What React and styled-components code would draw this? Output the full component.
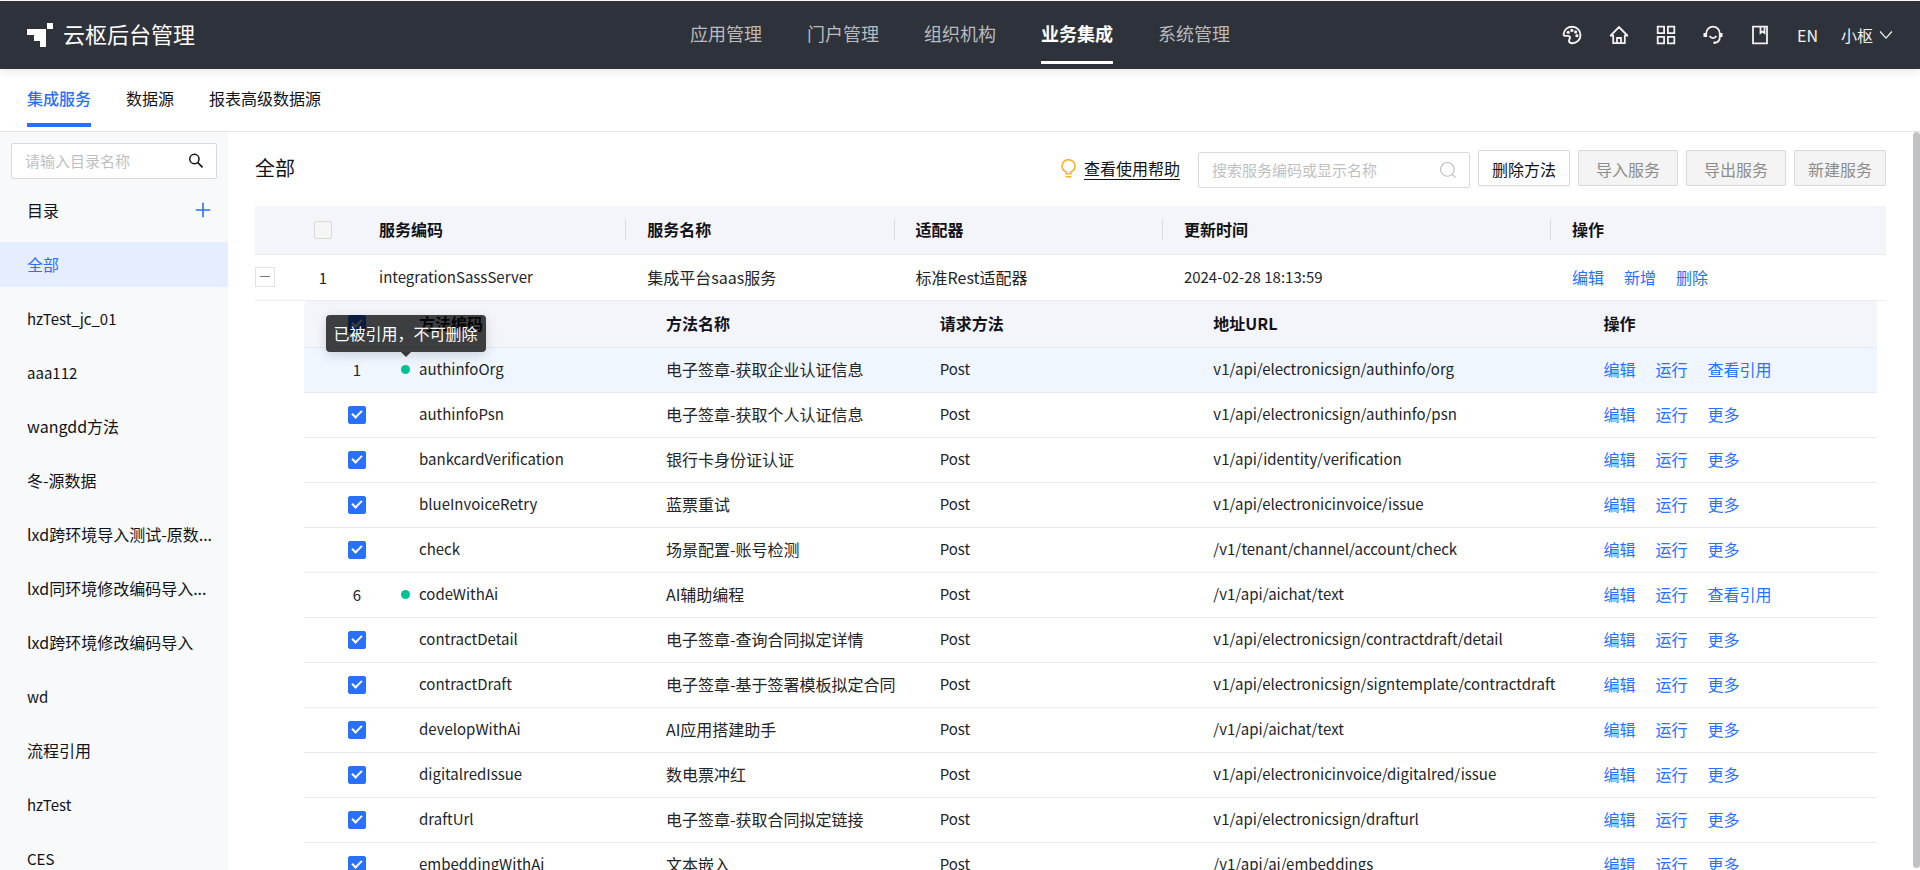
import React, { useState } from 'react';
import styled, { createGlobalStyle, css } from 'styled-components';

const GlobalStyle = createGlobalStyle`
  *, *::before, *::after { box-sizing: border-box; }
  html, body, #root { height: 100%; }
  body {
    margin: 0;
    overflow: hidden;
    background: #fff;
    color: #111218;
    font-family: "Noto Sans CJK SC", "Noto Sans", sans-serif;
    font-size: 16px;
    line-height: 24px;
  }
  a { color: inherit; text-decoration: none; }
  button, input { font: inherit; color: inherit; }
  button { cursor: pointer; }
  button:disabled { cursor: not-allowed; }
`;

const Page = styled.div`
  display: flex;
  flex-direction: column;
  height: 100vh;
  padding-top: 1px;
`;

const Header = styled.header`
  display: grid;
  grid-template-columns: 1fr auto 1fr;
  align-items: center;
  flex: none;
  height: 68px;
  padding: 0 27px;
  background: #2e323a;
  color: #fff;
  box-shadow: 0 2px 9px rgba(0, 0, 0, 0.1);
  z-index: 2;
`;

const Brand = styled.a`
  display: flex;
  align-items: center;
  gap: 10px;
  font-size: 22px;
  span { padding-bottom: 4px; }
`;

const MainNav = styled.nav`
  display: flex;
  gap: 45px;
  height: 100%;
`;

const NavLink = styled.a`
  display: flex;
  align-items: center;
  height: 63px;
  padding-top: 4px;
  border-bottom: 3px solid transparent;
  font-size: 18px;
  color: #b9bbbe;
  ${p => p.$active && css`
    border-color: #fff;
    color: #fff;
    font-weight: 700;
  `}
`;

const HeaderTools = styled.div`
  display: flex;
  align-items: center;
  justify-content: flex-end;
  gap: 27px;
`;

const ToolButton = styled.button`
  display: flex;
  align-items: center;
  gap: 6px;
  padding: 0;
  border: 0;
  background: none;
  color: #f2f2f2;
  svg { display: block; }
`;

const UserTools = styled.div`
  display: flex;
  gap: 23px;
`;

const SubNav = styled.nav`
  display: flex;
  gap: 35px;
  flex: none;
  height: 63px;
  padding: 0 27px;
  border-bottom: 1px solid #e3e4e6;
`;

const SubLink = styled.a`
  display: flex;
  align-items: center;
  height: 58px;
  padding-top: 4px;
  border-bottom: 4px solid transparent;
  ${p => p.$active && css`
    border-color: #2970ff;
    color: #2970ff;
    font-weight: 500;
  `}
`;

const Body = styled.div`
  display: flex;
  flex: 1;
  min-height: 0;
`;

const Sidebar = styled.aside`
  flex: none;
  width: 228px;
  overflow: hidden;
  background: #f7f9fb;
`;

const SearchBox = styled.label`
  display: flex;
  align-items: center;
  align-self: flex-end;
  width: ${p => p.$width};
  height: 36px;
  margin: ${p => p.$margin || 0};
  padding: 0 12px 0 13px;
  border: 1px solid #d9d9d9;
  border-radius: 2px;
  background: #fff;
  svg { flex: none; color: ${p => p.$muted ? '#bfbfbf' : '#111218'}; }
`;

const SearchInput = styled.input`
  flex: 1;
  min-width: 0;
  padding: 0;
  border: 0;
  outline: 0;
  background: none;
  font-size: 15px;
  &::placeholder { color: #bfbfbf; opacity: 1; }
`;

const CatalogHead = styled.div`
  display: flex;
  align-items: center;
  justify-content: space-between;
  height: 63px;
  padding: 0 17px 2px 27px;
`;

const PlusButton = styled(ToolButton)`
  color: #2970ff;
`;

const CatalogList = styled.ul`
  display: flex;
  flex-direction: column;
  gap: 9px;
  margin: 0;
  padding: 0;
  list-style: none;
`;

const CatalogLink = styled.a`
  display: block;
  padding: 0 9px 0 27px;
  font-size: ${p => p.$latin ? '15px' : '16px'};
  line-height: 45px;
  white-space: nowrap;
  ${p => p.$active && css`
    background: #e5eeff;
    color: #2970ff;
  `}
`;

const Content = styled.main`
  flex: 1;
  min-width: 0;
  padding: 18px 27px 0;
  overflow: hidden;
`;

const Scrollbar = styled.div`
  flex: none;
  width: 7px;
  margin-bottom: 2px;
  border-radius: 4px;
  background: #c1c2c4;
`;

const Toolbar = styled.div`
  display: flex;
  align-items: flex-start;
  gap: 8px;
  height: 38px;
  margin-bottom: 18px;
  line-height: 36px;
`;

const PageTitle = styled.h1`
  flex: 1;
  margin: 0;
  font-size: 20px;
  font-weight: 400;
`;

const HelpLink = styled.a`
  display: flex;
  align-items: center;
  gap: 8px;
  height: 36px;
  margin-right: 10px;
  span {
    border-bottom: 1px solid #111218;
    line-height: 22px;
  }
`;

const ActionButton = styled.button`
  height: 36px;
  padding: 0 ${p => p.$wide ? '17px' : '13px'} 2px;
  border: 1px solid #d9d9d9;
  border-radius: 2px;
  background: #fff;
  box-shadow: 0 2px 0 rgba(0, 0, 0, 0.02);
  &:disabled {
    background: #f4f4f4;
    color: #8c8c8c;
    box-shadow: none;
  }
`;

const Table = styled.table`
  width: 100%;
  table-layout: fixed;
  border-collapse: separate;
  border-spacing: 0;
  text-align: left;
`;

const HeadCell = styled.th`
  height: ${p => p.$nested ? '47px' : '49px'};
  padding: 0 0 2px;
  border-bottom: 1px solid #e8eaec;
  background: #f4f5fa;
  font-weight: 700;
  &:first-child { border-top-left-radius: ${p => p.$nested ? '5px' : '0'}; }
`;

const CheckHeadCell = styled(HeadCell)`
  padding: 0 0 0 ${p => p.$nested ? '12px' : '0'};
`;

const HeadLabel = styled.div`
  padding-left: 21px;
  line-height: 21px;
  border-right: 1px solid ${p => p.$divider ? '#dcdde0' : 'transparent'};
`;

const Cell = styled.td`
  height: ${p => p.$nested ? '45px' : '46px'};
  padding: 0 0 2px ${p => p.$flush ? '0' : '21px'};
  border-bottom: 1px solid #ebecee;
  background: ${p => p.$hover ? '#eff6ff' : 'transparent'};
  color: #22242a;
  font-size: ${p => p.$latin ? '15px' : '16px'};
  white-space: nowrap;
`;

const IndexCell = styled(Cell)`
  padding: 0 0 0 ${p => p.$nested ? '12px' : '0'};
  text-align: center;
`;

const NestedCell = styled.td`
  padding: 0 9px 0 49px;
`;

const ExpandButton = styled.button`
  display: grid;
  place-items: center;
  width: 20px;
  height: 20px;
  padding: 0;
  border: 1px solid #e3e3e3;
  background: #fff;
  &::before {
    content: "";
    width: 10px;
    height: 1px;
    background: #777;
  }
`;

const CheckBox = styled.input`
  display: block;
  appearance: none;
  width: 18px;
  height: 18px;
  margin: 0 auto;
  border: 1px solid #d9d9d9;
  border-radius: 2px;
  background: #f5f5f5;
  &:checked {
    border-color: #2970ff;
    background: #2970ff;
  }
  &:checked::after {
    content: "";
    display: block;
    width: 6px;
    height: 10px;
    margin: 1px 0 0 5px;
    border: solid #fff;
    border-width: 0 2px 2px 0;
    transform: rotate(45deg);
  }
`;

const CodeLabel = styled.div`
  display: flex;
  align-items: center;
  gap: 9px;
  padding-left: ${p => p.$marked ? '3px' : '21px'};
`;

const Marker = styled.span`
  position: relative;
  width: 9px;
  height: 9px;
  border-radius: 50%;
  background: #00c293;
`;

const Tooltip = styled.span`
  position: absolute;
  left: 50%;
  bottom: 22px;
  margin-left: -80px;
  width: 160px;
  border-radius: 4px;
  background: rgba(0, 0, 0, 0.75);
  color: #fff;
  font-size: 16px;
  line-height: 37px;
  text-align: center;
  box-shadow: 0 3px 12px rgba(0, 0, 0, 0.15);
  z-index: 1;
  &::after {
    content: "";
    position: absolute;
    left: 50%;
    top: 100%;
    margin-left: -5px;
    border: 5px solid transparent;
    border-top-color: rgba(0, 0, 0, 0.75);
  }
`;

const Links = styled.div`
  display: flex;
  gap: 20px;
  color: #2970ff;
`;

const Icon = ({ size = 20, width = 1.5, children }) => (
  <svg width={size} height={size} viewBox="0 0 20 20" fill="none" stroke="currentColor" strokeWidth={width} aria-hidden="true">
    {children}
  </svg>
);

const Logo = () => (
  <svg width="26" height="24" viewBox="0 0 26 24" fill="#fff" aria-hidden="true">
    <path d="M20 0h6v6h-6zM0 6h19v18h-6v-6H7v-6H0z" />
  </svg>
);

const PaletteIcon = () => (
  <Icon width={1.9}>
    <path d="M1.600 9.800C1.900 5 5.400 1.800 10.200 1.800c4.600 0 8.300 3.600 8.300 8.200s-3.800 8.200-8.300 8.200c-2.300 0-3.200-1.100-3.200-2.400 0-1.500 1-1.900 1-3.100s-1-1.800-2.300-1.800H3c-1 0-1.400-.4-1.400-1.100Z" />
    <g fill="currentColor" stroke="none">
      <circle cx="6.200" cy="7.300" r="1.600" /><circle cx="9.900" cy="5.400" r="1.600" />
      <circle cx="13.600" cy="6.900" r="1.600" /><circle cx="14.900" cy="10.700" r="1.600" />
    </g>
  </Icon>
);

const HomeIcon = () => (
  <Icon width={1.8}>
    <path d="M1.200 11 10 2l8.800 9M1 10.500h3.500M15.500 10.500H19M4.200 10v8.200h11.600V10M8 18v-5h4v5" />
  </Icon>
);

const GridIcon = () => (
  <Icon width={1.8}>
    <path d="M1.700 1.700h6.400v6.400H1.700zM11.900 1.700h6.400v6.400h-6.400zM1.700 11.900h6.400v6.400H1.700zM11.900 11.900h6.400v6.400h-6.400z" />
  </Icon>
);

const ServiceIcon = () => (
  <Icon width={1.8}>
    <path d="M3.200 12V8.500a6.800 6.800 0 0 1 13.600 0V12c0 3.500-2.300 5.700-5.600 5.900" />
    <path d="M2 8v4M18 8v4" strokeWidth="3" />
    <path d="M6.600 11c1.500 2.700 5.300 2.700 6.800 0" />
    <circle cx="11.500" cy="17.800" r="1.200" fill="currentColor" stroke="none" />
  </Icon>
);

const BookIcon = () => (
  <Icon width={1.8}>
    <path d="M3 1.700h14v16.600H3zM10.500 2v6l2-1.500 2 1.500V2" />
  </Icon>
);

const ChevronIcon = () => (
  <Icon size={14} width={1.8}>
    <path d="m1.500 5 8.500 9.500L18.500 5" />
  </Icon>
);

const SearchIcon = () => (
  <Icon size={16} width={1.9}>
    <circle cx="8" cy="7.500" r="5.800" /><path d="m12 11.700 6.200 6.300" />
  </Icon>
);

const SearchThinIcon = () => (
  <Icon size={18} width={1.3}>
    <circle cx="9.300" cy="9.300" r="7.600" /><path d="m15 15 3.500 3.500" />
  </Icon>
);

const PlusIcon = () => (
  <Icon size={16} width={2}>
    <path d="M10 1v18M1 10h18" />
  </Icon>
);

const BulbIcon = () => (
  <svg width="15" height="19" viewBox="0 0 15 19" fill="none" stroke="#fbb32b" strokeWidth="1.6" aria-hidden="true">
    <path d="M5 14.700v-1.900C2.600 11.700 1 9.800 1 7.200a6.500 6.500 0 0 1 13 0c0 2.600-1.600 4.500-4 5.600v1.900zM4.500 17.800h6" />
  </svg>
);

const NAV = ['应用管理', '门户管理', '组织机构', '业务集成', '系统管理'];
const SUB_NAV = ['集成服务', '数据源', '报表高级数据源'];
const CATALOG = [
  '全部', 'hzTest_jc_01', 'aaa112', 'wangdd方法', '冬-源数据',
  'lxd跨环境导入测试-原数...', 'lxd同环境修改编码导入...', 'lxd跨环境修改编码导入',
  'wd', '流程引用', 'hzTest', 'CES',
];
const METHODS = [
  { code: 'authinfoOrg', name: '电子签章-获取企业认证信息', url: 'v1/api/electronicsign/authinfo/org', used: true, tip: true },
  { code: 'authinfoPsn', name: '电子签章-获取个人认证信息', url: 'v1/api/electronicsign/authinfo/psn' },
  { code: 'bankcardVerification', name: '银行卡身份证认证', url: 'v1/api/identity/verification' },
  { code: 'blueInvoiceRetry', name: '蓝票重试', url: 'v1/api/electronicinvoice/issue' },
  { code: 'check', name: '场景配置-账号检测', url: '/v1/tenant/channel/account/check' },
  { code: 'codeWithAi', name: 'AI辅助编程', url: '/v1/api/aichat/text', used: true },
  { code: 'contractDetail', name: '电子签章-查询合同拟定详情', url: 'v1/api/electronicsign/contractdraft/detail' },
  { code: 'contractDraft', name: '电子签章-基于签署模板拟定合同', url: 'v1/api/electronicsign/signtemplate/contractdraft' },
  { code: 'developWithAi', name: 'AI应用搭建助手', url: '/v1/api/aichat/text' },
  { code: 'digitalredIssue', name: '数电票冲红', url: 'v1/api/electronicinvoice/digitalred/issue' },
  { code: 'draftUrl', name: '电子签章-获取合同拟定链接', url: 'v1/api/electronicsign/drafturl' },
  { code: 'embeddingWithAi', name: '文本嵌入', url: '/v1/api/ai/embeddings' },
];

const isLatin = text => /^[\x20-\x7e]+$/.test(text);

const RowLinks = ({ items }) => (
  <Links>{items.map(t => <a href="#" key={t}>{t}</a>)}</Links>
);

function MethodRow({ method, index }) {
  const [checked, setChecked] = useState(true);
  const { code, name, url, used, tip } = method;
  return (
    <tr>
      <IndexCell $nested $latin $hover={tip}>
        {used ? index + 1 : (
          <CheckBox type="checkbox" aria-label={code} checked={checked} onChange={e => setChecked(e.target.checked)} />
        )}
      </IndexCell>
      <Cell $nested $latin $flush $hover={tip}>
        <CodeLabel $marked={used}>
          {used && <Marker>{tip && <Tooltip role="tooltip">已被引用，不可删除</Tooltip>}</Marker>}
          {code}
        </CodeLabel>
      </Cell>
      <Cell $nested $hover={tip}>{name}</Cell>
      <Cell $nested $latin $hover={tip}>Post</Cell>
      <Cell $nested $latin $hover={tip}>{url}</Cell>
      <Cell $nested $hover={tip}><RowLinks items={['编辑', '运行', used ? '查看引用' : '更多']} /></Cell>
    </tr>
  );
}

const MethodTable = () => (
  <Table>
    <colgroup>
      <col style={{ width: 94 }} /><col style={{ width: '15.7%' }} /><col style={{ width: '17.4%' }} />
      <col style={{ width: '17.4%' }} /><col style={{ width: '24.8%' }} /><col />
    </colgroup>
    <thead>
      <tr>
        <CheckHeadCell $nested><CheckBox type="checkbox" aria-label="全选方法" defaultChecked /></CheckHeadCell>
        {['方法编码', '方法名称', '请求方法', '地址URL', '操作'].map(t => (
          <HeadCell $nested key={t}><HeadLabel>{t}</HeadLabel></HeadCell>
        ))}
      </tr>
    </thead>
    <tbody>
      {METHODS.map((m, i) => <MethodRow key={m.code} method={m} index={i} />)}
    </tbody>
  </Table>
);

const ServiceTable = () => (
  <Table>
    <colgroup>
      <col style={{ width: 33 }} /><col style={{ width: 70 }} /><col style={{ width: '16.45%' }} />
      <col style={{ width: '16.45%' }} /><col style={{ width: '16.45%' }} /><col style={{ width: '23.8%' }} /><col />
    </colgroup>
    <thead>
      <tr>
        <HeadCell />
        <CheckHeadCell><CheckBox type="checkbox" aria-label="全选服务" disabled /></CheckHeadCell>
        {['服务编码', '服务名称', '适配器', '更新时间', '操作'].map(t => (
          <HeadCell key={t}><HeadLabel $divider={t !== '操作'}>{t}</HeadLabel></HeadCell>
        ))}
      </tr>
    </thead>
    <tbody>
      <tr>
        <Cell $flush><ExpandButton aria-label="收起" /></Cell>
        <IndexCell $latin>1</IndexCell>
        <Cell $latin>integrationSassServer</Cell>
        <Cell>集成平台saas服务</Cell>
        <Cell>标准Rest适配器</Cell>
        <Cell $latin>2024-02-28 18:13:59</Cell>
        <Cell><RowLinks items={['编辑', '新增', '删除']} /></Cell>
      </tr>
      <tr><NestedCell colSpan={7}><MethodTable /></NestedCell></tr>
    </tbody>
  </Table>
);

export default function App() {
  return (
    <Page>
      <GlobalStyle />
      <Header>
        <Brand href="#"><Logo /><span>云枢后台管理</span></Brand>
        <MainNav>
          {NAV.map(t => <NavLink href="#" key={t} $active={t === '业务集成'}>{t}</NavLink>)}
        </MainNav>
        <HeaderTools>
          <ToolButton aria-label="主题"><PaletteIcon /></ToolButton>
          <ToolButton aria-label="首页"><HomeIcon /></ToolButton>
          <ToolButton aria-label="应用"><GridIcon /></ToolButton>
          <ToolButton aria-label="客服"><ServiceIcon /></ToolButton>
          <ToolButton aria-label="文档"><BookIcon /></ToolButton>
          <UserTools>
            <ToolButton>EN</ToolButton>
            <ToolButton>小枢<ChevronIcon /></ToolButton>
          </UserTools>
        </HeaderTools>
      </Header>
      <SubNav>
        {SUB_NAV.map((t, i) => <SubLink href="#" key={t} $active={i === 0}>{t}</SubLink>)}
      </SubNav>
      <Body>
        <Sidebar>
          <SearchBox $width="206px" $margin="11px 11px 0">
            <SearchInput placeholder="请输入目录名称" aria-label="目录名称" />
            <SearchIcon />
          </SearchBox>
          <CatalogHead>
            目录
            <PlusButton aria-label="新增目录"><PlusIcon /></PlusButton>
          </CatalogHead>
          <CatalogList>
            {CATALOG.map((t, i) => (
              <li key={t}><CatalogLink href="#" $active={i === 0} $latin={isLatin(t)}>{t}</CatalogLink></li>
            ))}
          </CatalogList>
        </Sidebar>
        <Content>
          <Toolbar>
            <PageTitle>全部</PageTitle>
            <HelpLink href="#"><BulbIcon /><span>查看使用帮助</span></HelpLink>
            <SearchBox $width="272px" $muted>
              <SearchInput placeholder="搜索服务编码或显示名称" aria-label="服务编码或显示名称" />
              <SearchThinIcon />
            </SearchBox>
            <ActionButton>删除方法</ActionButton>
            <ActionButton $wide disabled>导入服务</ActionButton>
            <ActionButton $wide disabled>导出服务</ActionButton>
            <ActionButton disabled>新建服务</ActionButton>
          </Toolbar>
          <ServiceTable />
        </Content>
        <Scrollbar />
      </Body>
    </Page>
  );
}
